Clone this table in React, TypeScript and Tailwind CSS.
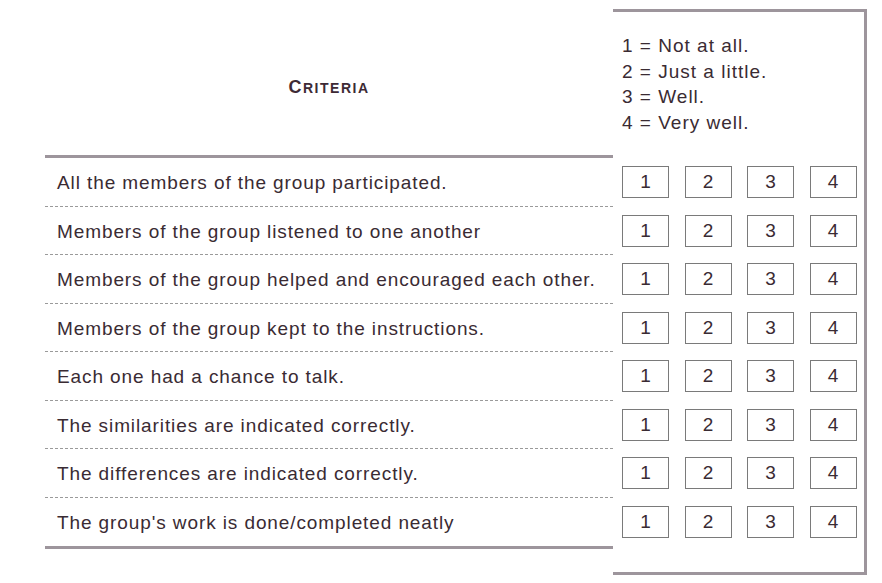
import React from "react";

const criteria = [
  "All the members of the group participated.",
  "Members of the group listened to one another",
  "Members of the group helped and encouraged each other.",
  "Members of the group kept to the instructions.",
  "Each one had a chance to talk.",
  "The similarities are indicated correctly.",
  "The differences are indicated correctly.",
  "The group's work is done/completed neatly",
];

const legend = ["1 = Not at all.", "2 = Just a little.", "3 = Well.", "4 = Very well."];

export default function App() {
  return (
    <main className="w-[882px] h-[583px] bg-white pl-[45px] pt-[9px] text-[#3a2b33] font-['Liberation_Sans',Arial,sans-serif]">
      <div className="flex">
        {/* ==== Criteria column ==== */}
        <div className="w-[568px]">
          <div className="h-[146px] pt-[10px] flex items-center justify-center">
            <p className="text-[18px] font-bold tracking-[1.5px] text-[#3d2a35]">
              C<span className="text-[14px]">RITERIA</span>
            </p>
          </div>
          <div className="h-[3px] bg-[#9d959c]" />
          {criteria.map((c, i) => (
            <div
              key={i}
              className={`h-[48.5px] flex items-center pl-[12px] pt-[3px] text-[19px] tracking-[0.9px] ${
                i < criteria.length - 1 ? "border-b border-dashed border-[#9a9a9a]" : ""
              }`}
            >
              {c}
            </div>
          ))}
          <div className="h-[3px] bg-[#9d959c]" />
        </div>

        {/* ==== Rating column ==== */}
        <div className="w-[254px] border-t-[3px] border-r-[3px] border-b-[3px] border-[#9d959c] pb-[26px]">
          <div className="h-[146px] pl-[9px] pt-[21px] text-[19px] tracking-[1px] leading-[25.5px]">
            {legend.map((l) => (
              <p key={l}>{l}</p>
            ))}
          </div>
          {criteria.map((_, i) => (
            <div key={i} className="h-[48.5px] flex items-center pl-[9px] gap-[15.5px]">
              {[1, 2, 3, 4].map((n) => (
                <div
                  key={n}
                  className="w-[47px] h-[32px] border border-[#7a7a7a] flex items-center justify-center text-[19px]"
                >
                  {n}
                </div>
              ))}
            </div>
          ))}
        </div>
      </div>
    </main>
  );
}
